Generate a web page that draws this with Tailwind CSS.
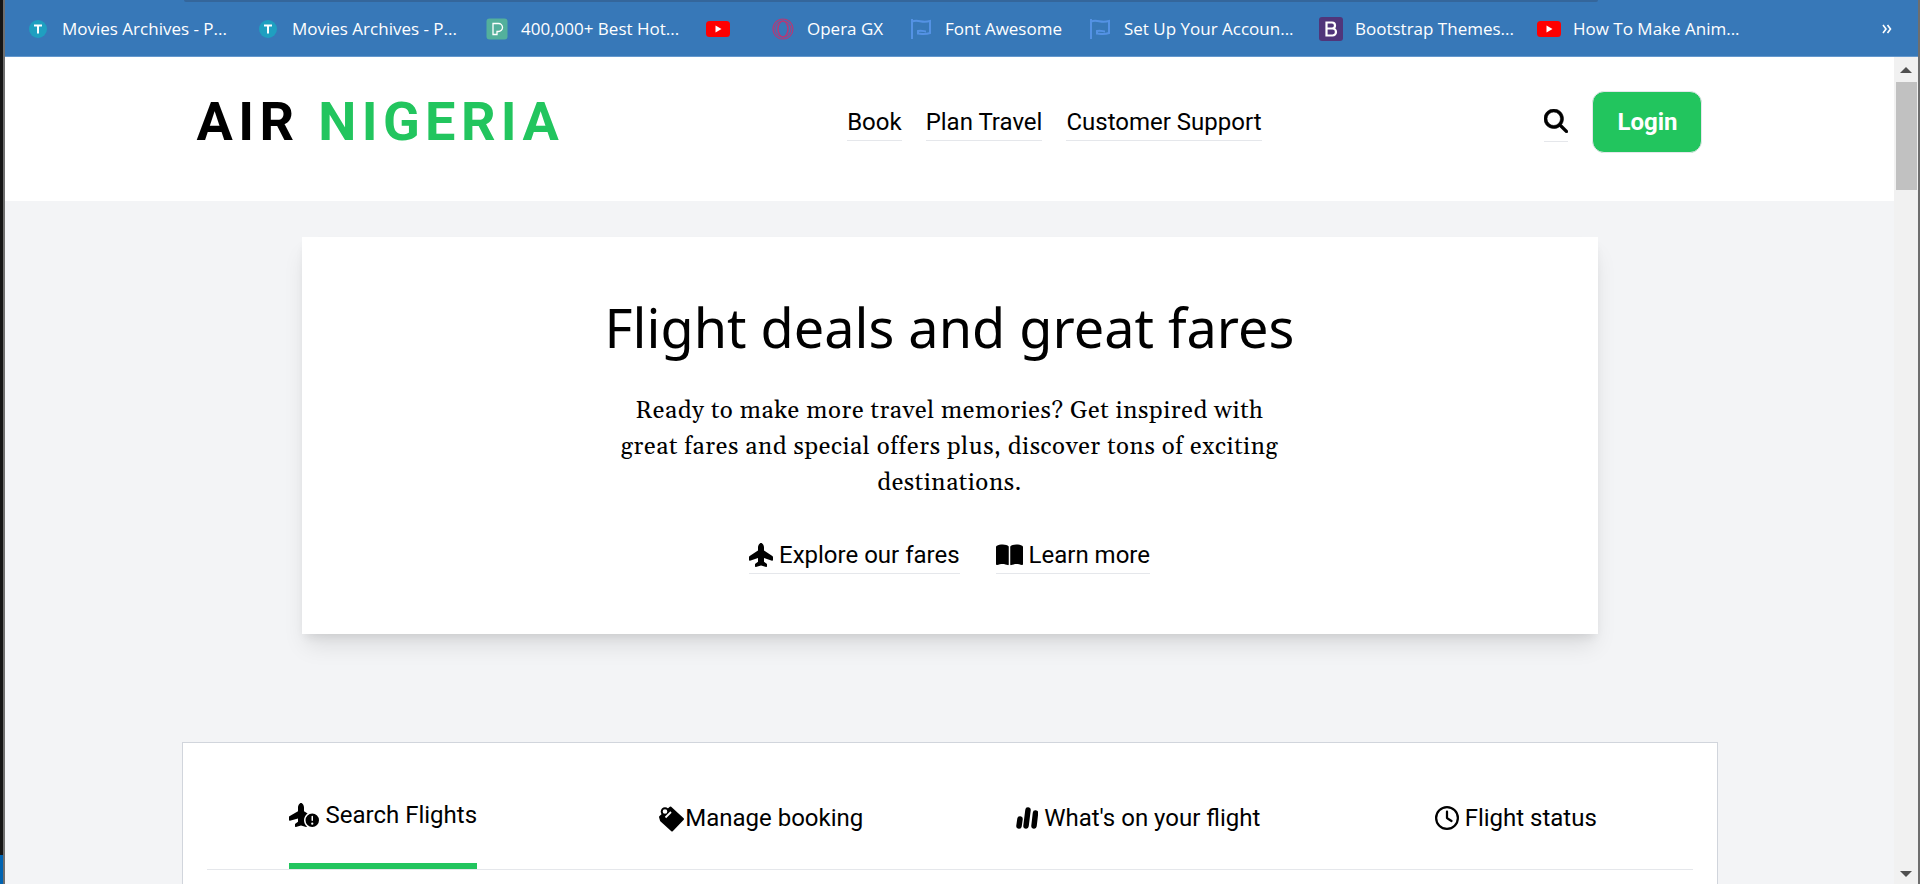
<!DOCTYPE html>
<html lang="en">
<head>
<meta charset="utf-8">
<title>Air Nigeria</title>
<script src="https://cdn.jsdelivr.net/npm/@tailwindcss/browser@4"></script>
</head>
<body class="flex h-screen overflow-hidden bg-[#6e6e6e] font-['Roboto',sans-serif] text-2xl text-black">
  <!-- desktop strip left of the browser window -->
  <div class="mr-[2px] flex w-[3px] shrink-0 flex-col bg-[#151515]"><div class="mt-auto h-[29px] bg-[#0063b1]"></div></div>

  <div class="mr-[2px] flex min-w-0 grow flex-col">
    <!-- bookmarks bar -->
    <div class="relative flex h-[57px] shrink-0 items-center justify-between border-b border-[#6498cd] bg-[#3778b8] pt-[2px] pr-[26px] pl-[21px] font-['Open_Sans',sans-serif] text-[17px] text-white">
      <div class="absolute top-0 right-[320px] left-[179px] h-[2px] rounded-b-lg bg-[#34669b]"></div>
      <nav class="flex items-center whitespace-nowrap" aria-label="Bookmarks">
        <a href="#" class="flex w-[230px] items-center gap-3"><svg class="size-6 shrink-0" viewBox="0 0 24 24"><circle cx="12" cy="12" r="9" fill="#1f9fc0"/><path d="M8 8.500h8M12 8.500v8" stroke="#fff" stroke-width="2" fill="none"/></svg>Movies Archives - P...</a>
        <a href="#" class="flex w-[229px] items-center gap-3"><svg class="size-6 shrink-0" viewBox="0 0 24 24"><circle cx="12" cy="12" r="9" fill="#1f9fc0"/><path d="M8 8.500h8M12 8.500v8" stroke="#fff" stroke-width="2" fill="none"/></svg>Movies Archives - P...</a>
        <a href="#" class="flex w-[221px] items-center gap-3"><svg class="size-6 shrink-0" viewBox="0 0 24 24"><rect x="1.500" y="1.500" width="21" height="21" rx="3" fill="#53b09c"/><path d="M8 6.500h5.500a3.500 3.500 0 0 1 0 8h-1.500v3H8z" stroke="#fff" stroke-width="1.300" fill="none"/></svg>400,000+ Best Hot...</a>
        <a href="#" class="flex w-[65px] items-center" aria-label="YouTube"><svg class="size-6 shrink-0" viewBox="0 0 24 24"><rect y="4" width="24" height="16" rx="3.500" fill="#f00"/><path d="M9.500 8.500v7l6-3.500z" fill="#fff"/></svg></a>
        <a href="#" class="flex w-[138px] items-center gap-3"><svg class="size-6 shrink-0" viewBox="0 0 24 24" fill="none" stroke="#b23a78"><circle cx="12" cy="12" r="10" stroke-width="1.200"/><circle cx="12" cy="12" r="8" stroke-width="1"/><ellipse cx="12" cy="12" rx="5" ry="8" stroke-width="1.600"/></svg>Opera GX</a>
        <a href="#" class="flex w-[179px] items-center gap-3"><svg class="size-6 shrink-0" viewBox="0 0 24 24" fill="none" stroke="#5492e4" stroke-width="2"><path d="M3 2v20M3 4.500c7-2.500 9 2 18-.5v12c-5 2-8 1-12 .5v-2.500c4-1 6 .5 8 .5"/></svg>Font Awesome</a>
        <a href="#" class="flex w-[231px] items-center gap-3"><svg class="size-6 shrink-0" viewBox="0 0 24 24" fill="none" stroke="#5492e4" stroke-width="2"><path d="M3 2v20M3 4.500c7-2.500 9 2 18-.5v12c-5 2-8 1-12 .5v-2.500c4-1 6 .5 8 .5"/></svg>Set Up Your Accoun...</a>
        <a href="#" class="flex w-[218px] items-center gap-3"><svg class="size-6 shrink-0" viewBox="0 0 24 24"><rect width="24" height="24" rx="3" fill="#50357a"/><path d="M7.500 5.500h5.500a3 3 0 0 1 0 6H7.500zM7.500 11.500h6a3.400 3.400 0 0 1 0 7h-6z" stroke="#fff" stroke-width="2.200" fill="none"/></svg>Bootstrap Themes...</a>
        <a href="#" class="flex items-center gap-3"><svg class="size-6 shrink-0" viewBox="0 0 24 24"><rect y="4" width="24" height="16" rx="3.500" fill="#f00"/><path d="M9.500 8.500v7l6-3.500z" fill="#fff"/></svg>How To Make Anim...</a>
      </nav>
      <button type="button" aria-label="More bookmarks"><svg class="h-[10px] w-[10px]" viewBox="0 0 10 10" fill="none" stroke="#fff" stroke-width="1.600"><path d="M1 1l3 4-3 4M5.500 1l3 4-3 4"/></svg></button>
    </div>

    <div class="flex min-h-0 grow">
      <!-- page -->
      <div class="min-w-0 grow overflow-hidden bg-gray-100">
        <header class="h-36 bg-white">
          <div class="mx-auto flex h-[129px] max-w-[1536px] items-center justify-between px-[15px]">
            <a href="#" class="text-[54px] leading-none font-bold tracking-widest">AIR <span class="text-[#22c55e]">NIGERIA</span></a>
            <nav class="flex gap-6">
              <a href="#" class="border-b border-gray-200 pt-[2px] leading-9">Book</a>
              <a href="#" class="border-b border-gray-200 pt-[2px] leading-9">Plan Travel</a>
              <a href="#" class="border-b border-gray-200 pt-[2px] leading-9">Customer Support</a>
            </nav>
            <div class="flex items-center gap-6">
              <button type="button" aria-label="Search" class="border-b border-gray-200 pt-2 pb-2"><svg class="size-6" viewBox="0 0 512 512"><path d="M416 208c0 45.900-14.900 88.300-40 122.700L502.600 457.400c12.500 12.500 12.500 32.800 0 45.300s-32.800 12.500-45.300 0L330.700 376c-34.400 25.200-76.800 40-122.700 40C93.100 416 0 322.900 0 208S93.100 0 208 0S416 93.100 416 208zM208 352a144 144 0 1 0 0-288 144 144 0 1 0 0 288z" stroke="#000" stroke-width="12"/></svg></button>
              <button type="button" class="rounded-xl border border-gray-200 bg-[#22c55e] px-6 py-3 leading-9 font-bold text-white">Login</button>
            </div>
          </div>
        </header>

        <main>
          <section class="mx-auto mt-9 flex w-full max-w-[1296px] flex-col items-center bg-white py-[60px] text-center shadow-[0_15px_22px_-4px_rgba(0,0,0,0.1),0_6px_9px_-3px_rgba(0,0,0,0.08)]">
            <h1 class="font-['Noto_Sans',sans-serif] text-[54px] leading-[60px]">Flight deals and great fares</h1>
            <p class="mt-9 max-w-[672px] font-[Georgia,Gelasio,'Liberation_Serif',serif] text-2xl leading-9 tracking-wide">Ready to make more travel memories? Get inspired with great fares and special offers plus, discover tons of exciting destinations.</p>
            <div class="mt-9 flex gap-9">
              <a href="#" class="flex items-center gap-[6px] border-b border-gray-200 leading-9"><svg class="size-6" viewBox="0 0 512 512"><path d="M192 93.700C192 59.500 221 0 256 0c36 0 64 59.500 64 93.700l0 66.300L497.800 278.500c8.900 5.900 14.200 15.900 14.200 26.600v56.700c0 10.900-10.700 18.600-21.100 15.200L320 320v80l57.600 43.200c4 3 6.400 7.800 6.400 12.800v42c0 7.800-6.300 14-14 14c-1.300 0-2.600-.2-3.900-.5L256 480 145.900 511.500c-1.300 .4-2.600 .5-3.900 .5c-7.800 0-14-6.300-14-14V456c0-5 2.400-9.800 6.400-12.800L192 400V320L21.100 377C10.700 380.400 0 372.700 0 361.800V305.100c0-10.700 5.300-20.700 14.200-26.600L192 160V93.700z"/></svg>Explore our fares</a>
              <a href="#" class="flex items-center gap-[6px] border-b border-gray-200 leading-9"><svg class="h-6 w-[27px]" viewBox="0 0 576 512"><path d="M249.600 471.500c10.800 3.800 22.400-4.100 22.400-15.500V78.600c0-4.200-1.600-8.400-5-11C247.400 52 202.400 32 144 32C93.500 32 46.300 45.300 18.100 56.100C6.800 60.500 0 71.700 0 83.800V454.100c0 11.900 12.800 20.200 24.100 16.500C55.600 460.100 105.500 448 144 448c33.900 0 79 14 105.600 23.500zm76.800 0C353 462 398.100 448 432 448c38.500 0 88.400 12.100 119.900 22.600c11.300 3.800 24.100-4.600 24.100-16.500V83.800c0-12.100-6.800-23.300-18.100-27.600C529.700 45.300 482.500 32 432 32c-58.400 0-103.400 20-123 35.600c-3.300 2.600-5 6.800-5 11V456c0 11.400 11.700 19.300 22.400 15.500z"/></svg>Learn more</a>
            </div>
          </section>

          <section class="mx-auto mt-[108px] h-96 max-w-[1536px] border border-gray-300 bg-white p-6">
            <div class="grid h-[103px] grid-cols-4 justify-items-center gap-6 border-b border-gray-200">
              <a href="#" class="flex items-center gap-[6px] border-b-6 border-[#22c55e]"><svg class="h-6 w-[30px]" viewBox="0 0 640 512"><path d="M256 0c-35 0-64 59.500-64 93.700v84.600L8.100 283.400c-5 2.800-8.100 8.200-8.100 13.900v65.500c0 10.600 10.200 18.300 20.400 15.400l171.600-49 0 70.900-57.600 43.200c-4 3-6.400 7.800-6.400 12.800v42c0 7.800 6.300 14 14 14c1.300 0 2.600-.2 3.900-.5L256 480l110.100 31.500c1.300 .4 2.600 .5 3.900 .5c6 0 11.100-3.700 13.100-9C344.500 470.700 320 422.200 320 368c0-60.600 30.600-114 77.100-145.600L320 178.300V93.700C320 59.500 292 0 256 0zM640 368a144 144 0 1 0 -288 0 144 144 0 1 0 288 0zM496 464a24 24 0 1 1 0-48 24 24 0 1 1 0 48zm0-192c8.800 0 16 7.200 16 16v80c0 8.800-7.200 16-16 16s-16-7.200-16-16V288c0-8.800 7.200-16 16-16z"/></svg>Search Flights</a>
              <a href="#" class="flex items-center"><svg class="size-[27px]" viewBox="0 0 27 27"><path d="M2 12L9.500 5 12.500 2.500 25 14 14 25.500 3 15.500z" stroke="#000" stroke-width="2" stroke-linejoin="round"/><circle cx="7" cy="6.500" r="3.300" fill="#fff" stroke="#000" stroke-width="2"/><path d="M7.500 12.500l5.500-5.500" stroke="#fff" stroke-width="1.800"/></svg>Manage booking</a>
              <a href="#" class="flex items-center gap-[6px]"><svg class="h-6 w-[22px]" viewBox="0 0 22 24" stroke="#000" stroke-width="5.500" stroke-linecap="round"><path d="M4 13L3 20M12 4L10 20M19.500 7L18 20"/></svg>What's on your flight</a>
              <a href="#" class="flex items-center gap-[6px]"><svg class="size-6" viewBox="0 0 512 512"><path d="M464 256A208 208 0 1 1 48 256a208 208 0 1 1 416 0zM0 256a256 256 0 1 0 512 0A256 256 0 1 0 0 256zM232 120V256c0 8 4 15.500 10.700 20l96 64c11 7.400 25.900 4.400 33.300-6.700s4.400-25.900-6.700-33.300L280 243.200V120c0-13.300-10.700-24-24-24s-24 10.700-24 24z"/></svg>Flight status</a>
            </div>
          </section>
        </main>
      </div>

      <!-- scrollbar -->
      <div class="flex w-6 shrink-0 flex-col items-center bg-[#f1f1f1]">
        <svg class="mt-[10px] h-[6px] w-3" viewBox="0 0 12 6" fill="#505050"><path d="M0 6L6 0l6 6z"/></svg>
        <div class="mt-[9px] h-[108px] w-[21px] bg-[#c1c1c1]"></div>
        <svg class="mt-auto mb-[7px] h-[6px] w-3" viewBox="0 0 12 6" fill="#505050"><path d="M0 0l6 6 6-6z"/></svg>
      </div>
    </div>
  </div>
</body>
</html>
